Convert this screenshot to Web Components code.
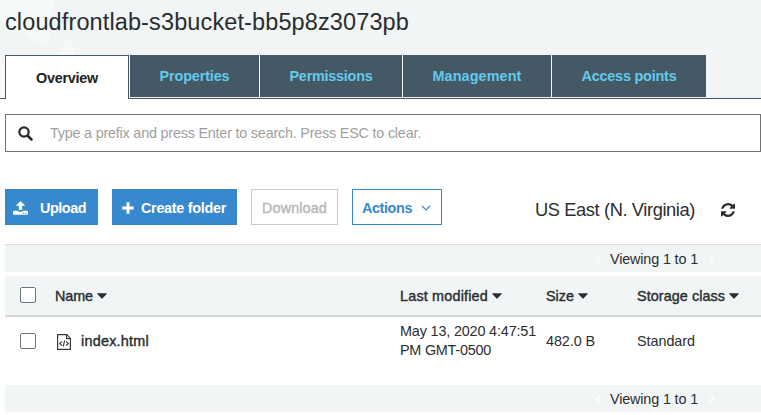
<!DOCTYPE html>
<html lang="en"><head><meta charset="utf-8"><title>S3 bucket</title>
<style>
body{margin:0;background:#fff;color:#2b2e30;font:14.4px/18px "Liberation Sans",Arial,sans-serif;overflow:hidden}
</style></head><body>
<s3-page></s3-page>
<script>
const define=(name,html,setup)=>customElements.define(name,class extends HTMLElement{
  connectedCallback(){
    if(this.shadowRoot)return;
    this.attachShadow({mode:"open"}).innerHTML=html;
    if(setup)setup(this,this.shadowRoot);
  }
});

/* Single line label; tracking is adjusted so it fills the width given in "w". */
define("fit-label",`<style>:host{display:inline-block;white-space:nowrap;flex:none}:host([medium]) span{-webkit-text-stroke:.4px currentColor}span{display:inline-block}</style><span><slot></slot></span>`,(el,root)=>{
  const s=root.querySelector("span"),w=+el.getAttribute("w");
  const n=el.textContent.length;
  const natural=s.getBoundingClientRect().width;
  if(w&&natural){s.style.letterSpacing=((w-natural)/n)+"px";el.style.width=w+"px"}
});

define("s3-icon",`<style>:host{display:block;flex:none}svg{display:block;width:100%;height:100%;overflow:visible}</style>`,(el,root)=>{
  const art={
    search:['0 0 15 15','<circle cx="6" cy="6" r="4.7" fill="none" stroke="currentColor" stroke-width="2.2"/><path d="M9.5 9.5l4 4" stroke="currentColor" stroke-width="2.5" stroke-linecap="round"/>'],
    upload:['0 0 15 14','<path fill="currentColor" d="M7.5 0l4.8 4.700H9.200v4.300H5.800v-4.300H2.700z"/><path fill="currentColor" d="M1 9.700h3.700q.3 1 1.300 1h3q1 0 1.300-1H14q1 0 1 1V13q0 .8-1 .8H1q-1 0-1-.8v-2.300q0-1 1-1z"/><path d="M10 12.300h1.200M12.200 12.300h1.200" stroke="#3788cd" stroke-width="1"/>'],
    plus:['0 0 12 12','<path d="M6 .3v11.4M.3 6h11.4" stroke="currentColor" stroke-width="3"/>'],
    down:['0 0 10 6','<path d="M1 1l4 4 4-4" fill="none" stroke="currentColor" stroke-width="1.2"/>'],
    refresh:['0 0 1536 1536','<path fill="currentColor" d="M1511 928q0 5-1 7-64 268-268 434.500T764 1536q-146 0-282.500-55T238 1324l-129 129q-19 19-45 19t-45-19-19-45V960q0-26 19-45t45-19h448q26 0 45 19t19 45-19 45l-137 137q71 66 161 102t187 36q134 0 250-65t186-179q11-17 53-117 8-23 30-23h192q13 0 22.500 9.500t9.500 22.500zm25-800v448q0 26-19 45t-45 19h-448q-26 0-45-19t-19-45 19-45l138-138Q969 256 768 256q-134 0-250 65T332 500q-11 17-53 117-8 23-30 23H50q-13 0-22.500-9.500T18 608v-7q65-268 270-434.500T768 0q146 0 284 55.500T1297 212l130-129q19-19 45-19t45 19 19 45z"/>'],
    caret:['0 0 10 6','<path d="M.5.3h9Q10 .4 9.700.9L5.400 5.600Q5 6 4.600 5.600L.3.900Q0 .4.500.3z" fill="currentColor"/>'],
    file:['0 0 14 16','<path d="M.6.7h9.200l3.600 3.700v10.900H.6zM9.500.8v3.900h3.900" fill="none" stroke="#3a3a3a" stroke-width="1.200"/><path d="M4.900 7.300L2.700 9.500l2.200 2.200M9.100 7.300l2.200 2.200-2.200 2.200M7.700 6.500l-1.500 6" fill="none" stroke="#3a3a3a" stroke-width="1.100"/>'],
    prev:['0 0 5 8','<path d="M4.300.4L.8 4l3.500 3.600" fill="none" stroke="#fff" stroke-width="1.300"/>'],
    next:['0 0 5 8','<path d="M.7.4L4.200 4 .7 7.600" fill="none" stroke="#fff" stroke-width="1.300"/>']
  }[el.getAttribute("name")];
  el.style.width=el.getAttribute("w")+"px";el.style.height=el.getAttribute("h")+"px";
  root.innerHTML+=`<svg viewBox="${art[0]}" preserveAspectRatio="none">${art[1]}</svg>`;
});

define("s3-tab",`<style>:host{display:flex;box-sizing:border-box;height:42px;align-items:center;justify-content:center;background:#455866;color:#62caeb;font-weight:700;flex:none}
:host([active]){height:44px;background:#fff;color:#222;border:1px solid #455866;border-bottom:0}</style><slot></slot>`);

define("s3-header",`<style>
:host{display:block;height:99px;box-sizing:border-box;background:#f1f5f6;position:relative}
.mark{position:absolute;left:0;top:0}
h1{position:relative;margin:0;padding:8px 0 0 5px;font:400 23.5px/28px "Liberation Sans",Arial,sans-serif;height:47px;color:#2a2d2e}
nav{position:relative;display:flex;gap:1px;padding-left:5px;height:44px;align-items:flex-start;background:linear-gradient(#455866,#455866) 0 100%/100% 1px no-repeat}
</style>
<svg class="mark" width="80" height="98"><path d="M0 0H55L48 43Q47 48 42 45L0 20zM62 39Q75 40 75 54V98H0V62Q30 72 54 57 69 48 62 39z" fill="#f6f9f9"/></svg>
<h1><fit-label w="404">cloudfrontlab-s3bucket-bb5p8z3073pb</fit-label></h1>
<nav><s3-tab active style="width:124px"><fit-label w="62">Overview</fit-label></s3-tab><s3-tab style="width:129px"><fit-label w="70">Properties</fit-label></s3-tab><s3-tab style="width:142px"><fit-label w="83">Permissions</fit-label></s3-tab><s3-tab style="width:148px"><fit-label w="89">Management</fit-label></s3-tab><s3-tab style="width:154px"><fit-label w="95">Access points</fit-label></s3-tab></nav>`);

define("s3-search",`<style>:host{display:flex;box-sizing:border-box;height:38px;margin:15px 0 0 5px;border:1px solid #707273;align-items:center;padding-left:12px;gap:17px;color:#a0a0a0}s3-icon{color:#2b2b2b}</style>
<s3-icon name="search" w="15" h="15"></s3-icon><fit-label w="371">Type a prefix and press Enter to search. Press ESC to clear.</fit-label>`);

define("s3-button",`<style>:host{display:flex;box-sizing:border-box;height:36px;align-items:center;flex:none;border:1px solid #3788cd;color:#3788cd;background:#fff;font-weight:700;padding:2px 0 0}
:host([primary]){background:#3788cd;color:#fff}:host([disabled]){color:#b6b8b9;border-color:#cacbcc}</style><slot></slot>`);

define("s3-toolbar",`<style>:host{display:flex;height:36px;padding:37px 0 0 5px;gap:14px}
.region{display:flex;align-items:center;flex:1;justify-content:flex-end;gap:26px;padding:6px 26px 0 0;font-size:18.3px}s3-icon[name=upload]{margin:0 12px 1px 7px}s3-icon[name=plus]{margin:0 7px 1px 9px}s3-icon[name=down]{margin:0 0 0 9px}</style>
<s3-button primary style="width:93px"><s3-icon name="upload" w="15" h="14"></s3-icon><fit-label w="46">Upload</fit-label></s3-button>
<s3-button primary style="width:125px"><s3-icon name="plus" w="12" h="12"></s3-icon><fit-label w="85">Create folder</fit-label></s3-button>
<s3-button disabled style="width:87px;justify-content:center"><fit-label w="65" style="font-weight:400" medium>Download</fit-label></s3-button>
<s3-button style="width:90px;padding-left:9px"><fit-label w="50">Actions</fit-label><s3-icon name="down" w="10" h="6"></s3-icon></s3-button>
<div class="region"><fit-label w="160">US East (N. Virginia)</fit-label><s3-icon name="refresh" w="14" h="14"></s3-icon></div>`);

define("s3-pager",`<style>:host{display:flex;box-sizing:border-box;height:27px;margin-left:5px;background:#f1f5f6;justify-content:flex-end;align-items:center;gap:11px;padding:1px 47px 0 0}
:host([top]){height:28px;margin-top:19px;border-top:1px solid #dcdedf}s3-icon[name=prev]{margin-right:-2px}</style>
<s3-icon name="prev" w="5" h="8"></s3-icon><fit-label w="88">Viewing 1 to 1</fit-label><s3-icon name="next" w="5" h="8"></s3-icon>`);

define("s3-table",`<style>:host{display:block;margin:4px 0 0 5px}
.r{display:grid;grid-template-columns:50px 345px 146px 91px 1fr;align-items:center;box-sizing:border-box}
.h{background:#f1f5f6;height:41px;border-bottom:2px solid #d4d7d8;padding-top:1px}
.b{height:68px;align-items:start}
.h div{display:flex;align-items:center;gap:2px}
i{display:block;width:16px;height:16px;box-sizing:border-box;border:1px solid #6c7880;border-radius:2px;background:#fff;margin-left:15px}
.h i{margin-top:-2px}.b i{margin-top:16px}
.name{display:flex;align-items:center;padding:15px 0 0 2px;gap:10px;height:18px}.name s3-icon{margin-top:1px}
.date{padding-top:5px;display:flex;flex-direction:column;align-items:flex-start;line-height:19px}.c{padding-top:15px}</style>
<div class="r h"><i></i><div><fit-label medium w="38">Name</fit-label><s3-icon name="caret" w="10" h="6" style="margin-left:2px"></s3-icon></div><div><fit-label medium w="88">Last modified</fit-label><s3-icon name="caret" w="10" h="6" style="margin-left:2px"></s3-icon></div><div><fit-label medium w="28">Size</fit-label><s3-icon name="caret" w="10" h="6" style="margin-left:2px"></s3-icon></div><div><fit-label medium w="88">Storage class</fit-label><s3-icon name="caret" w="10" h="6" style="margin-left:2px"></s3-icon></div></div>
<div class="r b"><i></i><div class="name"><s3-icon name="file" w="14" h="16"></s3-icon><fit-label medium w="68">index.html</fit-label></div><div class="date"><fit-label w="136">May 13, 2020 4:47:51</fit-label><fit-label w="91">PM GMT-0500</fit-label></div><div class="c"><fit-label w="49">482.0 B</fit-label></div><div class="c"><fit-label w="58">Standard</fit-label></div></div>`);

define("s3-page",`<style>:host{display:block;width:761px;height:415px;overflow:hidden}</style>
<s3-header></s3-header><s3-search></s3-search><s3-toolbar></s3-toolbar><s3-pager top></s3-pager><s3-table></s3-table><s3-pager></s3-pager>`);
</script></body></html>
